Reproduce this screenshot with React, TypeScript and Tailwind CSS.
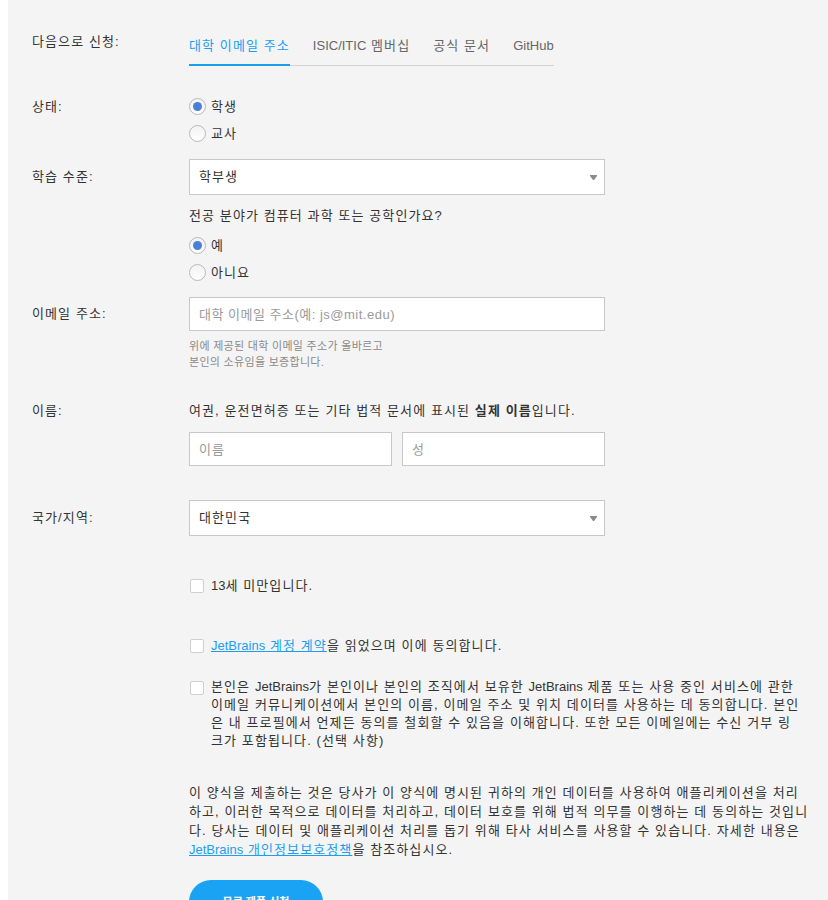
import { useState } from "react";

const font = "font-['Liberation_Sans','Noto_Sans_CJK_KR',sans-serif]";

// Latin runs keep their natural spacing; Hangul gets widened to match the reference
function L({ children }: { children: React.ReactNode }) {
  return <span className="tracking-normal">{children}</span>;
}

function Radio({ checked, label, onClick }: { checked: boolean; label: string; onClick: () => void }) {
  return (
    <button type="button" onClick={onClick} className="flex h-[27px] items-center gap-[5px] text-left">
      <span className="flex h-[17px] w-[17px] items-center justify-center rounded-full border border-[#b9b9b9] bg-gradient-to-b from-[#f2f2f2] to-white">
        {checked && <span className="h-[9px] w-[9px] rounded-full bg-[#4a7fd9]" />}
      </span>
      <span className="text-[13px] text-[#333]">{label}</span>
    </button>
  );
}

function Check({ children, top = false }: { children: React.ReactNode; top?: boolean }) {
  const [on, setOn] = useState(false);
  return (
    <label className={`flex gap-[7px] ${top ? "items-start" : "items-center"}`}>
      <span
        onClick={() => setOn(!on)}
        className={`ml-px h-[14px] w-[14px] shrink-0 rounded-[2px] border border-[#cfcfcf] bg-white ${top ? "mt-[3px]" : ""}`}
      >
        {on && <span className="block h-full w-full bg-[#4a7fd9]" />}
      </span>
      <span className="text-[13px] leading-[18px] text-[#333]">{children}</span>
    </label>
  );
}

function Select({ value }: { value: string }) {
  return (
    <div className="flex h-[36px] w-[416px] items-center justify-between border border-[#c8c8c8] bg-white pl-[9px] pr-[7px] text-[13px] text-[#333]">
      <span>{value}</span>
      <svg width="7" height="5" viewBox="0 0 7 5">
        <path d="M0 0h7v1L4 5H3L0 1z" fill="#8a8a8a" />
      </svg>
    </div>
  );
}

function Row({ label, labelLh, children, className = "" }: { label?: string; labelLh: string; children: React.ReactNode; className?: string }) {
  return (
    <div className={`grid grid-cols-[157px_1fr] ${className}`}>
      <div className={`text-[13px] text-[#333] ${labelLh}`}>{label}</div>
      <div>{children}</div>
    </div>
  );
}

export default function App() {
  const [tab, setTab] = useState(0);
  const [role, setRole] = useState(0);
  const [cs, setCs] = useState(0);
  const tabs: React.ReactNode[] = ["대학 이메일 주소", <><L>ISIC/ITIC</L> 멤버십</>, "공식 문서", <L>GitHub</L>];

  return (
    <div className={`min-h-screen bg-white ${font} tracking-[1.1px]`}>
      <div className="ml-2 min-h-[900px] bg-[#f4f4f4] pl-6 pt-[33px]">
        <Row label="다음으로 신청:" labelLh="leading-[18px]">
          <div className="inline-flex gap-[23px] border-b border-[#d4d4d4]">
            {tabs.map((t, i) => (
              <button
                key={i}
                type="button"
                onClick={() => setTab(i)}
                className={`-mb-px pb-[9px] text-[13px] leading-[18px] ${
                  tab === i ? "border-b-2 border-[#1a9ff0] text-[#1a9ff0]" : "border-b-2 border-transparent text-[#666]"
                }`}
              >
                {t}
              </button>
            ))}
          </div>
        </Row>

        <Row label="상태:" labelLh="leading-[27px]" className="mt-[27px]">
          <Radio checked={role === 0} label="학생" onClick={() => setRole(0)} />
          <Radio checked={role === 1} label="교사" onClick={() => setRole(1)} />
        </Row>

        <Row label="학습 수준:" labelLh="leading-[36px]" className="mt-3">
          <Select value="학부생" />
          <p className="mt-3 text-[13px] leading-[18px] text-[#333]">전공 분야가 컴퓨터 과학 또는 공학인가요?</p>
          <div className="mt-[7px]">
            <Radio checked={cs === 0} label="예" onClick={() => setCs(0)} />
            <Radio checked={cs === 1} label="아니요" onClick={() => setCs(1)} />
          </div>
        </Row>

        <Row label="이메일 주소:" labelLh="leading-[34px]" className="mt-[11px]">
          <input
            placeholder="대학 이메일 주소(예: js@mit.edu)"
            className="h-[34px] w-[416px] border border-[#c8c8c8] bg-white px-[9px] text-[13px] tracking-[0.5px] text-[#333] outline-none placeholder:text-[#9a9a9a]"
          />
          <p className="mt-[7px] text-[11px] leading-[16px] tracking-[0.3px] text-[#8a8a8a]">
            위에 제공된 대학 이메일 주소가 올바르고
            <br />
            본인의 소유임을 보증합니다.
          </p>
        </Row>

        <Row label="이름:" labelLh="leading-[18px]" className="mt-8">
          <p className="text-[13px] leading-[18px] text-[#333]">
            여권, 운전면허증 또는 기타 법적 문서에 표시된 <b className="font-bold">실제 이름</b>입니다.
          </p>
          <div className="mt-3 flex w-[416px] gap-[10px]">
            <input
              placeholder="이름"
              className="h-[34px] min-w-0 flex-1 border border-[#c8c8c8] bg-white px-[9px] text-[13px] outline-none placeholder:text-[#9a9a9a]"
            />
            <input
              placeholder="성"
              className="h-[34px] min-w-0 flex-1 border border-[#c8c8c8] bg-white px-[9px] text-[13px] outline-none placeholder:text-[#9a9a9a]"
            />
          </div>
        </Row>

        <Row label="국가/지역:" labelLh="leading-[36px]" className="mt-[34px]">
          <Select value="대한민국" />
        </Row>

        <Row labelLh="" className="mt-[41px]">
          <Check>
            <L>13</L>세 미만입니다.
          </Check>
        </Row>

        <Row labelLh="" className="mt-[42px]">
          <Check>
            <a href="#" className="text-[#1a9ff0] underline">
              <L>JetBrains</L> 계정 계약
            </a>
            을 읽었으며 이에 동의합니다.
          </Check>
        </Row>

        <Row labelLh="" className="mt-[23px]">
          <div className="w-[611px]">
            <Check top>
              본인은 <L>JetBrains</L>가 본인이나 본인의 조직에서 보유한 <L>JetBrains</L> 제품 또는 사용 중인 서비스에 관한
              이메일 커뮤니케이션에서 본인의 이름, 이메일 주소 및 위치 데이터를 사용하는 데 동의합니다. 본인은 내
              프로필에서 언제든 동의를 철회할 수 있음을 이해합니다. 또한 모든 이메일에는 수신 거부 링크가 포함됩니다.
              (선택 사항)
            </Check>
          </div>
        </Row>

        <Row labelLh="" className="mt-[33px]">
          <p className="w-[621px] text-[13px] leading-[19px] text-[#333]">
            이 양식을 제출하는 것은 당사가 이 양식에 명시된 귀하의 개인 데이터를 사용하여 애플리케이션을 처리하고, 이러한
            목적으로 데이터를 처리하고, 데이터 보호를 위해 법적 의무를 이행하는 데 동의하는 것입니다. 당사는 데이터 및
            애플리케이션 처리를 돕기 위해 타사 서비스를 사용할 수 있습니다. 자세한 내용은{" "}
            <a href="#" className="text-[#1a9ff0] underline">
              <L>JetBrains</L> 개인정보보호정책
            </a>
            을 참조하십시오.
          </p>
          <button
            type="button"
            className="mt-[21px] h-[44px] w-[134px] rounded-full bg-[#1aa3f5] text-[11px] font-bold tracking-normal text-white"
          >
            무료 제품 신청
          </button>
        </Row>
      </div>
    </div>
  );
}
